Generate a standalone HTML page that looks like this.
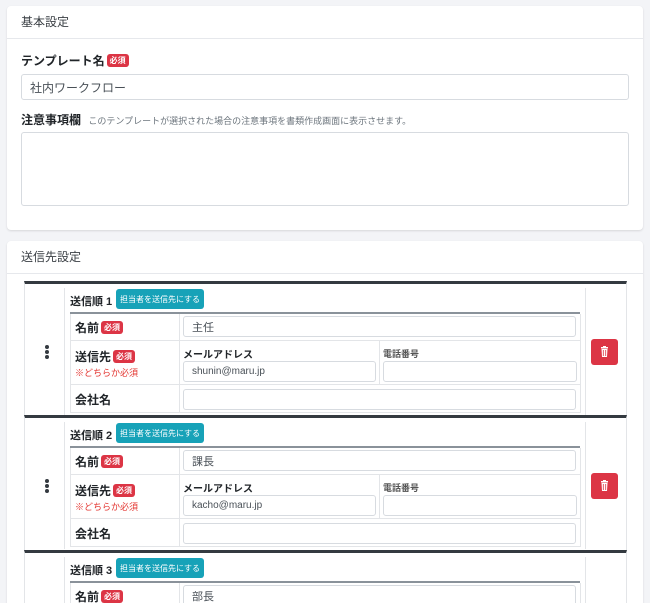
<!DOCTYPE html>
<html style="width:650px;height:603px;overflow:hidden"><head><meta charset="utf-8">
<style>
*{box-sizing:border-box;margin:0;padding:0}
body{width:650px;height:603px;overflow:hidden;background:#f3f4f7;font-family:"Liberation Sans","Noto Sans CJK JP",sans-serif;color:#212529;position:relative}
.abs{position:absolute}
.card{position:absolute;left:7px;width:636px;background:#fff;border-radius:4px;box-shadow:0 1px 2px rgba(0,0,0,.12)}
.hd{position:absolute;left:0;right:0;top:0;border-bottom:1px solid #e6e8ec;font-size:12px;color:#3a3f44;padding-left:14px}
.inp{position:absolute;border:1px solid #d7dbe0;border-radius:3px;background:#fff;font-size:11px;color:#495057;padding-left:8px;display:flex;align-items:center}
.badge{display:inline-block;background:#dc3545;color:#fff;font-size:8px;font-weight:bold;padding:1px 3px;border-radius:3px;line-height:11px;vertical-align:2px;margin-left:2px}
.lbl{position:absolute;font-size:12px;font-weight:bold;color:#212529}
.blk{position:absolute;left:24px;width:603px;height:137px;border-top:3px solid #343a40;background:#fff;border-left:1px solid #e3e5e8;border-right:1px solid #e3e5e8}
.vl{position:absolute;width:1px;background:#e3e5e8}
.hl{position:absolute;height:1px;background:#e3e5e8}
.btn{position:absolute;background:#17a2b8;color:#fff;font-size:8px;border-radius:3px;display:flex;align-items:center;justify-content:center}
.del{position:absolute;background:#dc3545;border-radius:3px}
</style></head><body>

<div class="card" style="top:6px;height:224px">
  <div class="hd" style="height:33px;line-height:33px">基本設定</div>
  <div class="lbl" style="left:14px;top:46px">テンプレート名<span class="badge">必須</span></div>
  <div class="inp" style="left:14px;top:68px;width:608px;height:26px;font-size:12px">社内ワークフロー</div>
  <div class="lbl" style="left:14px;top:105px">注意事項欄 <span style="font-weight:normal;font-size:9px;color:#6c757d;margin-left:4px">このテンプレートが選択された場合の注意事項を書類作成画面に表示させます。</span></div>
  <div class="inp" style="left:14px;top:126px;width:608px;height:74px"></div>
</div>

<div class="card" style="top:241px;height:380px">
  <div class="hd" style="height:33px;line-height:33px">送信先設定</div>
</div>

<div class="blk" style="top:281px">
  <div class="vl" style="left:39px;top:4px;height:127px"></div>
  <div class="vl" style="left:560px;top:4px;height:127px"></div>
  <div class="abs" style="left:20px;top:61px;width:4px">
    <div style="width:4px;height:4px;border-radius:2px;background:#343a40;margin-bottom:1px"></div>
    <div style="width:4px;height:4px;border-radius:2px;background:#343a40;margin-bottom:1px"></div>
    <div style="width:4px;height:4px;border-radius:2px;background:#343a40"></div>
  </div>
  <div class="lbl" style="left:45px;top:9px;font-size:11px">送信順 1</div>
  <div class="btn" style="left:91px;top:5px;width:88px;height:20px">担当者を送信先にする</div>
  <div class="abs" style="left:45px;top:28px;width:510px;height:2px;background:#8a929a"></div>
  <div class="hl" style="left:45px;top:56px;width:510px"></div>
  <div class="hl" style="left:45px;top:100px;width:510px"></div>
  <div class="hl" style="left:45px;top:128px;width:510px"></div>
  <div class="vl" style="left:45px;top:30px;height:99px"></div>
  <div class="vl" style="left:154px;top:30px;height:99px"></div>
  <div class="vl" style="left:354px;top:57px;height:43px"></div>
  <div class="vl" style="left:555px;top:30px;height:99px"></div>
  <div class="lbl" style="left:50px;top:35px">名前<span class="badge">必須</span></div>
  <div class="inp" style="left:158px;top:32px;width:393px;height:21px">主任</div>
  <div class="lbl" style="left:50px;top:64px">送信先<span class="badge">必須</span></div>
  <div class="abs" style="left:50px;top:82px;font-size:9px;color:#e3342f">※どちらか必須</div>
  <div class="abs" style="left:158px;top:62px;font-size:10px;font-weight:bold">メールアドレス</div>
  <div class="abs" style="left:358px;top:63px;font-size:9px;font-weight:bold;color:#555">電話番号</div>
  <div class="inp" style="left:158px;top:77px;width:193px;height:21px;font-size:10px">shunin@maru.jp</div>
  <div class="inp" style="left:358px;top:77px;width:194px;height:21px"></div>
  <div class="lbl" style="left:50px;top:107px">会社名</div>
  <div class="inp" style="left:158px;top:105px;width:393px;height:21px"></div>
  <div class="del" style="left:566px;top:55px;width:27px;height:26px">
    <svg width="27" height="26" viewBox="0 0 27 26"><rect x="10" y="8" width="7" height="1.5" fill="#fff"/><rect x="12" y="7" width="3" height="1.5" fill="#fff"/><path d="M10.5 10h6l-.5 8h-5z" fill="#fff"/><path d="M12.3 11v6M14.7 11v6" stroke="#dc3545" stroke-width=".8"/></svg>
  </div>
</div>

<div class="blk" style="top:415px">
  <div class="vl" style="left:39px;top:4px;height:127px"></div>
  <div class="vl" style="left:560px;top:4px;height:127px"></div>
  <div class="abs" style="left:20px;top:61px;width:4px">
    <div style="width:4px;height:4px;border-radius:2px;background:#343a40;margin-bottom:1px"></div>
    <div style="width:4px;height:4px;border-radius:2px;background:#343a40;margin-bottom:1px"></div>
    <div style="width:4px;height:4px;border-radius:2px;background:#343a40"></div>
  </div>
  <div class="lbl" style="left:45px;top:9px;font-size:11px">送信順 2</div>
  <div class="btn" style="left:91px;top:5px;width:88px;height:20px">担当者を送信先にする</div>
  <div class="abs" style="left:45px;top:28px;width:510px;height:2px;background:#8a929a"></div>
  <div class="hl" style="left:45px;top:56px;width:510px"></div>
  <div class="hl" style="left:45px;top:100px;width:510px"></div>
  <div class="hl" style="left:45px;top:128px;width:510px"></div>
  <div class="vl" style="left:45px;top:30px;height:99px"></div>
  <div class="vl" style="left:154px;top:30px;height:99px"></div>
  <div class="vl" style="left:354px;top:57px;height:43px"></div>
  <div class="vl" style="left:555px;top:30px;height:99px"></div>
  <div class="lbl" style="left:50px;top:35px">名前<span class="badge">必須</span></div>
  <div class="inp" style="left:158px;top:32px;width:393px;height:21px">課長</div>
  <div class="lbl" style="left:50px;top:64px">送信先<span class="badge">必須</span></div>
  <div class="abs" style="left:50px;top:82px;font-size:9px;color:#e3342f">※どちらか必須</div>
  <div class="abs" style="left:158px;top:62px;font-size:10px;font-weight:bold">メールアドレス</div>
  <div class="abs" style="left:358px;top:63px;font-size:9px;font-weight:bold;color:#555">電話番号</div>
  <div class="inp" style="left:158px;top:77px;width:193px;height:21px;font-size:10px">kacho@maru.jp</div>
  <div class="inp" style="left:358px;top:77px;width:194px;height:21px"></div>
  <div class="lbl" style="left:50px;top:107px">会社名</div>
  <div class="inp" style="left:158px;top:105px;width:393px;height:21px"></div>
  <div class="del" style="left:566px;top:55px;width:27px;height:26px">
    <svg width="27" height="26" viewBox="0 0 27 26"><rect x="10" y="8" width="7" height="1.5" fill="#fff"/><rect x="12" y="7" width="3" height="1.5" fill="#fff"/><path d="M10.5 10h6l-.5 8h-5z" fill="#fff"/><path d="M12.3 11v6M14.7 11v6" stroke="#dc3545" stroke-width=".8"/></svg>
  </div>
</div>

<div class="blk" style="top:550px;height:53px">
  <div class="vl" style="left:39px;top:4px;height:60px"></div>
  <div class="vl" style="left:560px;top:4px;height:60px"></div>
  <div class="lbl" style="left:45px;top:9px;font-size:11px">送信順 3</div>
  <div class="btn" style="left:91px;top:5px;width:88px;height:20px">担当者を送信先にする</div>
  <div class="abs" style="left:45px;top:28px;width:510px;height:2px;background:#8a929a"></div>
  <div class="vl" style="left:45px;top:30px;height:30px"></div>
  <div class="vl" style="left:154px;top:30px;height:30px"></div>
  <div class="vl" style="left:555px;top:30px;height:30px"></div>
  <div class="lbl" style="left:50px;top:35px">名前<span class="badge">必須</span></div>
  <div class="inp" style="left:158px;top:32px;width:393px;height:21px">部長</div>
</div>

</body></html>
